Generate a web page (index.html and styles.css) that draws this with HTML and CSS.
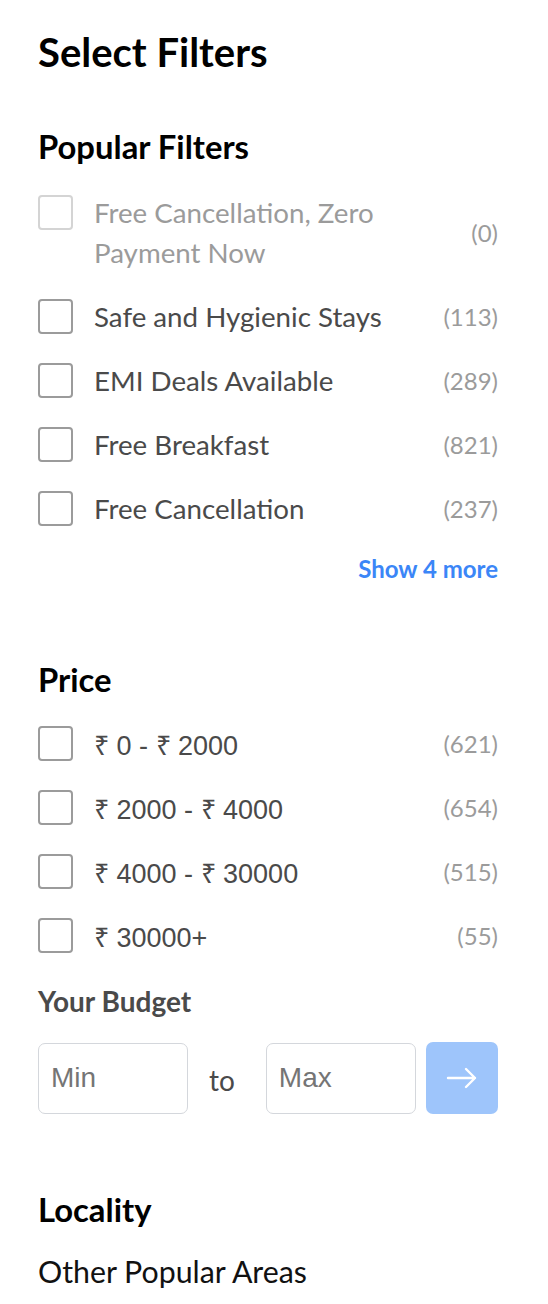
FILE: index.html
```html
<!DOCTYPE html>
<html lang="en">
<head>
<meta charset="utf-8">
<title>Select Filters</title>
<link rel="stylesheet" href="styles.css">
</head>
<body>
<div class="page">
  <h1 class="title">Select Filters</h1>

  <section class="section popular">
    <h2 class="section-title">Popular Filters</h2>
    <ul class="filter-list">
      <li class="filter disabled"><span class="box"></span><span class="label">Free Cancellation, Zero Payment Now</span><span class="count">(0)</span></li>
      <li class="filter"><span class="box"></span><span class="label">Safe and Hygienic Stays</span><span class="count">(113)</span></li>
      <li class="filter"><span class="box"></span><span class="label">EMI Deals Available</span><span class="count">(289)</span></li>
      <li class="filter"><span class="box"></span><span class="label">Free Breakfast</span><span class="count">(821)</span></li>
      <li class="filter"><span class="box"></span><span class="label">Free Cancellation</span><span class="count">(237)</span></li>
    </ul>
    <div class="more-row"><a class="more" href="#">Show 4 more</a></div>
  </section>

  <section class="section price">
    <h2 class="section-title">Price</h2>
    <ul class="filter-list">
      <li class="filter"><span class="box"></span><span class="label amount">₹ 0 - ₹ 2000</span><span class="count">(621)</span></li>
      <li class="filter"><span class="box"></span><span class="label amount">₹ 2000 - ₹ 4000</span><span class="count">(654)</span></li>
      <li class="filter"><span class="box"></span><span class="label amount">₹ 4000 - ₹ 30000</span><span class="count">(515)</span></li>
      <li class="filter"><span class="box"></span><span class="label amount">₹ 30000+</span><span class="count">(55)</span></li>
    </ul>
    <h3 class="budget-title">Your Budget</h3>
    <div class="budget">
      <input class="budget-input" type="text" placeholder="Min">
      <span class="to">to</span>
      <input class="budget-input" type="text" placeholder="Max">
      <button class="go" type="button" aria-label="Apply">
        <svg width="32" height="22" viewBox="0 0 32 22" fill="none" stroke="#fff" stroke-width="2.4" stroke-linecap="round" stroke-linejoin="round"><path d="M2 11h27M20 2l9 9-9 9"/></svg>
      </button>
    </div>
  </section>

  <section class="section locality">
    <h2 class="section-title">Locality</h2>
    <p class="sub">Other Popular Areas</p>
  </section>
</div>
</body>
</html>
```

FILE: styles.css
```css
* { box-sizing: border-box; }
html, body { margin: 0; padding: 0; background: #fff; }
body { font-family: Lato, "Open Sans", sans-serif; color: #4a4a4a; }

.page { padding: 32px 50px 0 38px; }

.title {
  margin: 0;
  font-size: 40px;
  line-height: 40px;
  font-weight: 700;
  color: #000;
}

.section-title {
  margin: 0;
  font-size: 32.8px;
  line-height: 36px;
  font-weight: 700;
  color: #000;
}

.popular { margin-top: 57px; }
.popular .filter-list { margin-top: 28px; }

.filter-list {
  list-style: none;
  margin: 0;
  padding: 0;
  display: flex;
  flex-direction: column;
  gap: 24px;
}

.filter {
  display: flex;
  align-items: flex-start;
  font-size: 27.7px;
  line-height: 40px;
  color: #4a4a4a;
}

.box {
  flex: none;
  width: 35px;
  height: 35px;
  margin-top: 2px;
  margin-right: 21px;
  border: 2px solid #9b9b9b;
  border-radius: 4px;
}

.label { flex: 1; padding-right: 30px; }

.label.amount {
  font-family: "Liberation Sans", Arial, sans-serif;
  font-size: 27px;
  line-height: 36px;
  padding-top: 4px;
}

.count {
  flex: none;
  align-self: center;
  font-size: 24px;
  color: #9b9b9b;
}

.filter.disabled .label { color: #9b9b9b; }
.filter.disabled .box { border-color: #d4d4d4; }

.more-row {
  display: flex;
  justify-content: flex-end;
  margin-top: 25px;
}
.more {
  font-size: 24px;
  line-height: 30px;
  font-weight: 700;
  color: #3b86f7;
  text-decoration: none;
}

.price { margin-top: 78px; }
.price .filter-list { margin-top: 26px; }

.budget-title {
  margin: 27px 0 0;
  font-size: 28px;
  line-height: 36px;
  font-weight: 700;
  color: #4a4a4a;
}

.budget {
  display: flex;
  align-items: center;
  margin-top: 23px;
}

.budget-input {
  width: 150px;
  height: 71px;
  padding: 0 12px;
  border: 1.5px solid #d4d7dc;
  border-radius: 7px;
  font-family: "Liberation Sans", Arial, sans-serif;
  font-size: 28px;
  color: #4a4a4a;
  outline: none;
}
.budget-input::placeholder { color: #757575; }

.to {
  margin: 4px 31px 0 21px;
  font-size: 28px;
  color: #4a4a4a;
}

.go {
  margin-left: 10px;
  width: 72px;
  height: 72px;
  border: 0;
  border-radius: 7px;
  background: #9ec5fb;
  display: flex;
  align-items: center;
  justify-content: center;
  padding: 0;
}

.locality { margin-top: 78px; }

.sub {
  margin: 25px 0 0;
  font-size: 30.3px;
  line-height: 36px;
  color: #111;
}
```
